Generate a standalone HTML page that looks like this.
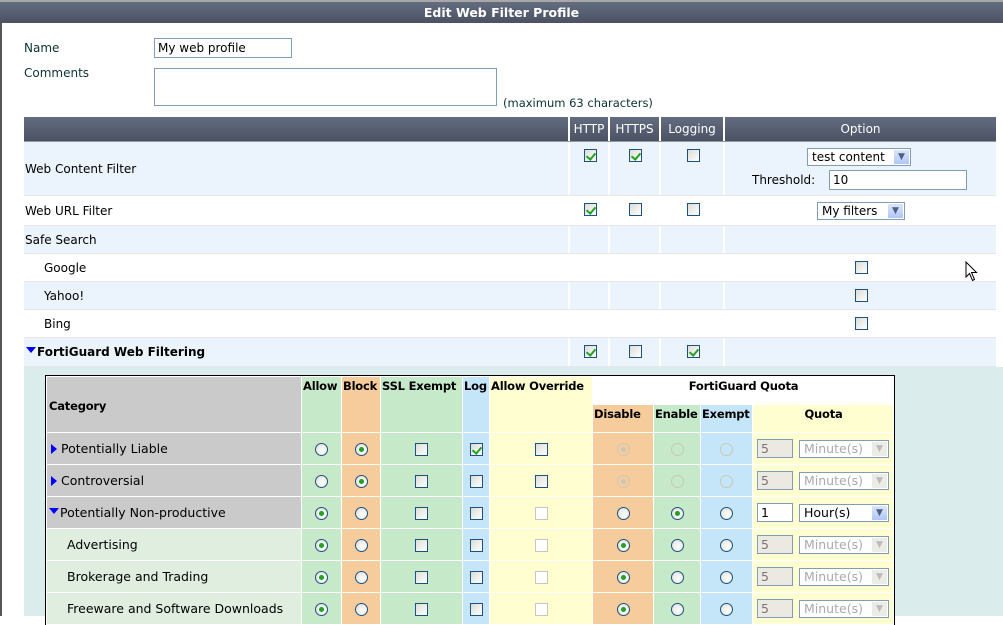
<!DOCTYPE html>
<html><head><meta charset="utf-8"><style>
*{box-sizing:border-box;margin:0;padding:0}
body{width:1003px;height:616px;overflow:hidden;background:#fff;font-family:"DejaVu Sans","Liberation Sans",sans-serif;font-size:12px;color:#000;position:relative}
.a{position:absolute!important}
.title{left:0;top:0;width:1003px;height:23px;border-top:2px solid #a8a8a8;background:linear-gradient(#646d80,#4a5263);color:#fff;font-weight:bold;text-align:center;line-height:21px;font-size:12.5px}
.lb{color:#0c3333}
.inp{border:1px solid #7f9db9;background:#fff}
.cb{display:inline-block;width:13px;height:13px;border:1px solid #1c5180;background:linear-gradient(135deg,#dcdcd7,#fff);position:relative;vertical-align:middle}
.cb.k::after{content:"";position:absolute;left:3px;top:1px;width:4px;height:7px;border:solid #21a121;border-width:0 2px 2px 0;transform:rotate(40deg)}
.cb.d{border-color:#c9c7ba;background:#fff}
.rd{display:inline-block;width:13px;height:13px;border:1px solid #1c5180;border-radius:50%;background:radial-gradient(circle at 60% 60%,#fff,#dcdcd7);position:relative;vertical-align:middle}
.rd.k::after{content:"";position:absolute;left:3px;top:3px;width:5px;height:5px;border-radius:50%;background:#21a121}
.rd.d{border-color:#cac8bb;background:none}
.rd.d.k::after{background:#cac8bb}
.row{left:24px;width:972px;border-bottom:1px solid #e6e6e6}
.b{background:#ebf4fd}
.vl{position:absolute;top:0;bottom:0;width:2px;background:#fff}
.c{position:absolute;text-align:center}
table.ft{position:absolute;left:45px;top:375px;width:849px;table-layout:fixed;border:1px solid #000;border-bottom:none;border-spacing:1px;background:#fff;font-size:12.5px}
.ft td{padding:0;height:31px;text-align:center;vertical-align:middle;white-space:nowrap;overflow:hidden}
.ft th{font-weight:bold;vertical-align:top;padding:2px 0 0 1px;height:27px;white-space:nowrap;text-align:left;overflow:hidden;font-size:11.5px;letter-spacing:-0.2px}
.g{background:#cacaca}.al{background:#c5e9c9}.bl{background:#f6cc9c}.lg{background:#c5e5f8}.ov{background:#fffed1}.sg{background:#e0eee0}
.ft td.n{text-align:left;padding-left:4px}
.q{display:inline-block;width:36px;height:19px;border:1px solid #7f9db9;background:#ebe9e1;color:#777;text-align:left;padding-left:3px;line-height:17px;vertical-align:middle}
.sel{display:inline-block;width:90px;height:18px;border:1px solid #7f9db9;background:#fff;color:#aaa;text-align:left;padding-left:4px;line-height:16px;vertical-align:middle;margin-left:6px;position:relative}
.sel i{position:absolute;right:1px;top:1px;width:15px;height:14px;background:#ecebe6;color:#bbb;font-style:normal;font-size:9px;text-align:center;line-height:14px}
.sel.on{color:#000}.sel.on i{background:linear-gradient(#dbe5fb,#b1c6f6);color:#4d6185}
.tri{display:inline-block;width:0;height:0;border-top:5px solid transparent;border-bottom:5px solid transparent;border-left:6px solid #0000ff;margin-right:4px;vertical-align:-1px}
.trd{display:inline-block;width:0;height:0;border-left:5px solid transparent;border-right:5px solid transparent;border-top:6px solid #0000ff;margin-right:1px;vertical-align:3px}
</style></head><body>
<div class="a" style="left:0;top:0;width:2px;height:616px;background:#555"></div>
<div class="a title">Edit Web Filter Profile</div>
<div class="a lb" style="left:24px;top:41px">Name</div>
<div class="a inp" style="left:154px;top:38px;width:138px;height:20px;padding:2px 3px">My web profile</div>
<div class="a lb" style="left:24px;top:66px">Comments</div>
<div class="a inp" style="left:154px;top:68px;width:343px;height:38px"></div>
<div class="a lb" style="left:503px;top:96px;font-size:11.5px">(maximum 63 characters)</div>

<div class="a" style="left:24px;top:117px;width:972px;height:25px;background:linear-gradient(#646d80,#4a5263);border-bottom:1px solid #8e9aa0;color:#fff;line-height:24px">
<div class="vl" style="left:544px"></div><div class="vl" style="left:584px"></div><div class="vl" style="left:635px"></div><div class="vl" style="left:699px"></div>
<div class="c" style="left:546px;width:38px">HTTP</div><div class="c" style="left:586px;width:49px">HTTPS</div><div class="c" style="left:637px;width:62px">Logging</div><div class="c" style="left:701px;width:271px">Option</div>
</div>

<div class="a row b" style="top:142px;height:54px"><div class="vl" style="left:544px"></div><div class="vl" style="left:584px"></div><div class="vl" style="left:635px"></div><div class="vl" style="left:699px"></div>
<div class="a" style="left:1px;top:20px">Web Content Filter</div>
<span class="a cb k" style="left:560px;top:7px"></span><span class="a cb k" style="left:605px;top:7px"></span><span class="a cb" style="left:663px;top:7px"></span>
<div class="a inp" style="left:783px;top:6px;width:104px;height:18px;padding-left:4px;line-height:16px">test content<span class="a" style="right:1px;top:1px;width:15px;height:14px;background:linear-gradient(#dbe5fb,#b1c6f6);color:#4d6185;font-size:9px;text-align:center;line-height:14px">&#9660;</span></div>
<div class="a" style="left:728px;top:31px">Threshold:</div>
<div class="a inp" style="left:805px;top:28px;width:138px;height:20px;padding:2px 3px">10</div>
</div>
<div class="a row" style="top:196px;height:30px">
<div class="a" style="left:1px;top:8px">Web URL Filter</div>
<span class="a cb k" style="left:560px;top:7px"></span><span class="a cb" style="left:605px;top:7px"></span><span class="a cb" style="left:663px;top:7px"></span>
<div class="a inp" style="left:793px;top:6px;width:88px;height:18px;padding-left:4px;line-height:16px">My filters<span class="a" style="right:1px;top:1px;width:15px;height:14px;background:linear-gradient(#dbe5fb,#b1c6f6);color:#4d6185;font-size:9px;text-align:center;line-height:14px">&#9660;</span></div>
</div>
<div class="a row b" style="top:226px;height:28px"><div class="vl" style="left:544px"></div><div class="vl" style="left:584px"></div><div class="vl" style="left:635px"></div><div class="vl" style="left:699px"></div><div class="a" style="left:1px;top:7px">Safe Search</div></div>
<div class="a row" style="top:254px;height:28px"><div class="a" style="left:20px;top:7px">Google</div><span class="a cb" style="left:831px;top:7px"></span></div>
<div class="a row b" style="top:282px;height:28px"><div class="vl" style="left:544px"></div><div class="vl" style="left:584px"></div><div class="vl" style="left:635px"></div><div class="vl" style="left:699px"></div><div class="a" style="left:20px;top:7px">Yahoo!</div><span class="a cb" style="left:831px;top:7px"></span></div>
<div class="a row" style="top:310px;height:28px"><div class="a" style="left:20px;top:7px">Bing</div><span class="a cb" style="left:831px;top:7px"></span></div>
<div class="a row b" style="top:338px;height:29px"><div class="vl" style="left:544px"></div><div class="vl" style="left:584px"></div><div class="vl" style="left:635px"></div><div class="vl" style="left:699px"></div>
<div class="a" style="left:2px;top:7px;font-weight:bold"><span class="trd"></span>FortiGuard Web Filtering</div>
<span class="a cb k" style="left:560px;top:7px"></span><span class="a cb" style="left:605px;top:7px"></span><span class="a cb k" style="left:663px;top:7px"></span></div>
<div class="a" style="left:24px;top:367px;width:979px;height:249px;background:#dbecec"></div>

<svg class="a" style="left:965px;top:261px" width="14" height="22" viewBox="0 0 14 22"><path d="M1 1 L1 16 L4.5 12.5 L7.5 19.5 L9.5 18.5 L6.5 11.5 L11.5 11.5 Z" fill="#fff" stroke="#000" stroke-width="1"/></svg>

<table class="ft">
<colgroup><col style="width:254px"><col style="width:39px"><col style="width:38px"><col style="width:81px"><col style="width:26px"><col style="width:102px"><col style="width:60px"><col style="width:46px"><col style="width:51px"><col style="width:140px"></colgroup>
<tr><th rowspan="2" class="g" style="vertical-align:middle;padding-left:2px">Category</th><th rowspan="2" class="al">Allow</th><th rowspan="2" class="bl">Block</th><th rowspan="2" class="al">SSL Exempt</th><th rowspan="2" class="lg">Log</th><th rowspan="2" class="ov">Allow Override</th><th colspan="4" style="background:#fff;text-align:center">FortiGuard Quota</th></tr>
<tr><th class="bl">Disable</th><th class="al">Enable</th><th class="lg">Exempt</th><th class="ov" style="text-align:center">Quota</th></tr>
<tr><td class="g n"><span class="tri"></span>Potentially Liable</td><td class="al"><span class="rd"></span></td><td class="bl"><span class="rd k"></span></td><td class="al"><span class="cb"></span></td><td class="lg"><span class="cb k"></span></td><td class="ov"><span class="cb"></span></td><td class="bl"><span class="rd d k"></span></td><td class="al"><span class="rd d"></span></td><td class="lg"><span class="rd d"></span></td><td class="ov"><span class="q">5</span><span class="sel">Minute(s)<i>&#9660;</i></span></td></tr>
<tr><td class="g n"><span class="tri"></span>Controversial</td><td class="al"><span class="rd"></span></td><td class="bl"><span class="rd k"></span></td><td class="al"><span class="cb"></span></td><td class="lg"><span class="cb"></span></td><td class="ov"><span class="cb"></span></td><td class="bl"><span class="rd d k"></span></td><td class="al"><span class="rd d"></span></td><td class="lg"><span class="rd d"></span></td><td class="ov"><span class="q">5</span><span class="sel">Minute(s)<i>&#9660;</i></span></td></tr>
<tr><td class="g n" style="padding-left:2px"><span class="trd"></span>Potentially Non-productive</td><td class="al"><span class="rd k"></span></td><td class="bl"><span class="rd"></span></td><td class="al"><span class="cb"></span></td><td class="lg"><span class="cb"></span></td><td class="ov"><span class="cb d"></span></td><td class="bl"><span class="rd"></span></td><td class="al"><span class="rd k"></span></td><td class="lg"><span class="rd"></span></td><td class="ov"><span class="q" style="background:#fff;color:#000">1</span><span class="sel on">Hour(s)<i>&#9660;</i></span></td></tr>
<tr><td class="sg n" style="padding-left:20px">Advertising</td><td class="al"><span class="rd k"></span></td><td class="bl"><span class="rd"></span></td><td class="al"><span class="cb"></span></td><td class="lg"><span class="cb"></span></td><td class="ov"><span class="cb d"></span></td><td class="bl"><span class="rd k"></span></td><td class="al"><span class="rd"></span></td><td class="lg"><span class="rd"></span></td><td class="ov"><span class="q">5</span><span class="sel">Minute(s)<i>&#9660;</i></span></td></tr>
<tr><td class="sg n" style="padding-left:20px">Brokerage and Trading</td><td class="al"><span class="rd k"></span></td><td class="bl"><span class="rd"></span></td><td class="al"><span class="cb"></span></td><td class="lg"><span class="cb"></span></td><td class="ov"><span class="cb d"></span></td><td class="bl"><span class="rd k"></span></td><td class="al"><span class="rd"></span></td><td class="lg"><span class="rd"></span></td><td class="ov"><span class="q">5</span><span class="sel">Minute(s)<i>&#9660;</i></span></td></tr>
<tr><td class="sg n" style="padding-left:20px">Freeware and Software Downloads</td><td class="al"><span class="rd k"></span></td><td class="bl"><span class="rd"></span></td><td class="al"><span class="cb"></span></td><td class="lg"><span class="cb"></span></td><td class="ov"><span class="cb d"></span></td><td class="bl"><span class="rd k"></span></td><td class="al"><span class="rd"></span></td><td class="lg"><span class="rd"></span></td><td class="ov"><span class="q">5</span><span class="sel">Minute(s)<i>&#9660;</i></span></td></tr>
</table>
</body></html>
